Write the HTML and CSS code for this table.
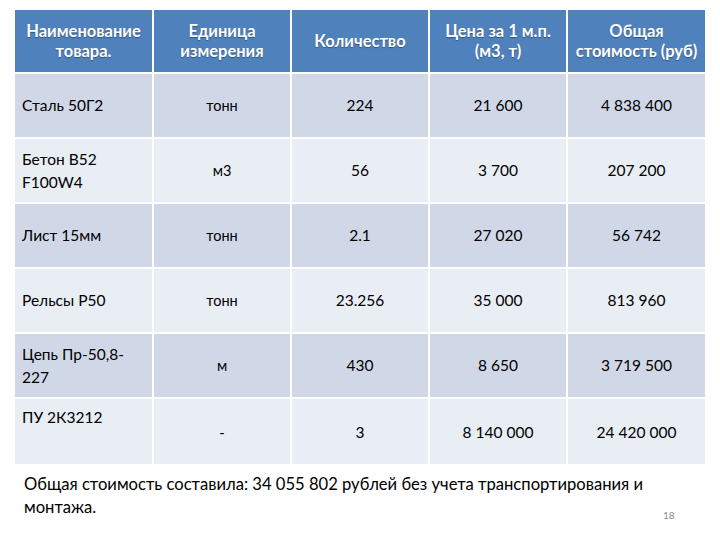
FILE: index.html
```html
<!DOCTYPE html>
<html lang="ru">
<head>
<meta charset="utf-8">
<link rel="stylesheet" href="styles.css">
</head>
<body>
<div class="slide">
  <table class="goods">
    <thead>
      <tr>
        <th>Наименование товара.</th>
        <th>Единица измерения</th>
        <th>Количество</th>
        <th>Цена за 1 м.п. (м3, т)</th>
        <th>Общая стоимость (руб)</th>
      </tr>
    </thead>
    <tbody>
      <tr class="odd"><td class="name">Сталь 50Г2</td><td class="unit">тонн</td><td>224</td><td>21 600</td><td>4 838 400</td></tr>
      <tr class="even"><td class="name">Бетон В52 F100W4</td><td class="unit">м3</td><td>56</td><td>3 700</td><td>207 200</td></tr>
      <tr class="odd"><td class="name">Лист 15мм</td><td class="unit">тонн</td><td>2.1</td><td>27 020</td><td>56 742</td></tr>
      <tr class="even"><td class="name">Рельсы Р50</td><td class="unit">тонн</td><td>23.256</td><td>35 000</td><td>813 960</td></tr>
      <tr class="odd"><td class="name">Цепь Пр-50,8-227</td><td class="unit">м</td><td>430</td><td>8 650</td><td>3 719 500</td></tr>
      <tr class="even last"><td class="name top">ПУ 2К3212</td><td class="unit">-</td><td>3</td><td>8 140 000</td><td>24 420 000</td></tr>
    </tbody>
  </table>
  <p class="summary">Общая стоимость составила: 34 055 802 рублей без учета транспортирования и монтажа.</p>
  <div class="page">18</div>
</div>
</body>
</html>
```

FILE: styles.css
```css
html, body {
  margin: 0;
  padding: 0;
  background: #ffffff;
}

.slide {
  width: 720px;
  height: 540px;
  padding: 10px 15px 0 15px;
  box-sizing: border-box;
  font-family: "Lato", "Open Sans", "Liberation Sans", sans-serif;
  color: #000000;
  position: relative;
}

.goods {
  width: 690px;
  border-collapse: collapse;
  table-layout: fixed;
}

.goods th,
.goods td {
  border: 2px solid #ffffff;
  text-align: center;
  vertical-align: middle;
  padding: 0 5px;
}

.goods tr > :first-child { border-left: none; }
.goods tr > :last-child { border-right: none; }
.goods thead th { border-top: none; }
.goods tbody tr:last-child td { border-bottom: none; }

.goods th {
  background: #4f81bd;
  color: #ffffff;
  font-weight: 700;
  font-size: 16.5px;
  line-height: 20px;
  height: 62px;
  text-shadow: 0 1px 1px rgba(0, 0, 0, 0.35);
}

.goods td {
  font-size: 15.5px;
  line-height: 23px;
  height: 63px;
}

.goods tr.last td {
  height: 58px;
  padding-top: 2px;
}

.goods tr.odd td { background: #d0d8e8; }
.goods tr.even td { background: #e9edf4; }

.goods td.name {
  text-align: left;
  padding-left: 7px;
}

.goods tr.last td.top {
  vertical-align: top;
  padding-top: 7px;
}

.goods td.unit {
  font-size: 14.5px;
}

.summary {
  margin: 9px 50px 0 9px;
  font-size: 16.6px;
  line-height: 23px;
}

.page {
  position: absolute;
  left: 663px;
  top: 509px;
  font-size: 10px;
  color: #8a8a8a;
}
```
